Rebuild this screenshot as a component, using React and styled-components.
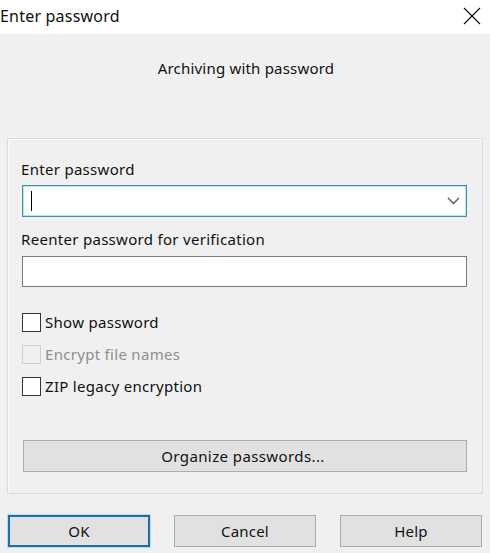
import React from "react";
import styled, { createGlobalStyle } from "styled-components";

const Global = createGlobalStyle`
  html, body { margin: 0; padding: 0; }
  body {
    width: 490px;
    height: 553px;
    overflow: hidden;
    background: #f0f0f0;
    font-family: "Noto Sans", "Open Sans", "Liberation Sans", sans-serif;
    color: #111;
  }
`;

const Window = styled.div`
  width: 490px;
  height: 553px;
  display: flex;
  flex-direction: column;
  background: #f0f0f0;
`;

const TitleBar = styled.div`
  height: 34px;
  background: #fff;
  display: flex;
  align-items: center;
  justify-content: space-between;
  padding: 0 9px 0 0;
  box-sizing: border-box;
`;

const Title = styled.div`
  font-size: 16px;
  margin-top: -2px;
  letter-spacing: 0.2px;
`;

const CloseIcon = styled.svg`
  width: 18px;
  height: 18px;
  margin-top: -3px;
`;

const Body = styled.div`
  display: flex;
  flex-direction: column;
  padding: 0 7px 0 7px;
`;

const Subtitle = styled.div`
  text-align: center;
  font-size: 15px;
  letter-spacing: 0.2px;
  margin-top: 24px;
  height: 20px;
  line-height: 20px;
  padding-left: 2px;
`;

const GroupBox = styled.div`
  margin-top: 60px;
  height: 356px;
  box-sizing: border-box;
  border: 1px solid #dcdcdc;
  box-shadow: inset 1px 1px 0 #fafafa;
  padding: 20px 15px 0 14px;
  display: flex;
  flex-direction: column;
`;

const Label = styled.div`
  font-size: 15px;
  letter-spacing: 0.3px;
  height: 20px;
  line-height: 20px;
  margin-left: -1px;
  margin-bottom: ${(p) => p.$mb || 0}px;
  margin-top: ${(p) => p.$mt || 0}px;
`;

const Field = styled.div`
  height: ${(p) => p.$h}px;
  box-sizing: border-box;
  background: #fff;
  border: 1px solid ${(p) => (p.$focused ? "#3f94ad" : "#7a7a7a")};
  box-shadow: ${(p) => (p.$focused ? "inset 0 0 0 1px #bfe0ea" : "none")};
  display: flex;
  align-items: center;
  justify-content: space-between;
  padding: 0 6px 0 8px;
`;

const Caret = styled.div`
  width: 1px;
  height: 20px;
  background: #000;
`;

const Chevron = styled.svg`
  width: 13px;
  height: 8px;
`;

const Checks = styled.div`
  display: flex;
  flex-direction: column;
  gap: 12px;
  margin-top: 25px;
`;

const CheckRow = styled.label`
  display: flex;
  align-items: center;
  gap: 4px;
  height: 20px;
  font-size: 15px;
  letter-spacing: 0.3px;
  color: ${(p) => (p.$disabled ? "#8f8f8f" : "#111")};
`;

const Box = styled.span`
  width: 19px;
  height: 19px;
  box-sizing: border-box;
  border: 1.5px solid ${(p) => (p.$disabled ? "#cfcfcf" : "#333")};
  background: ${(p) => (p.$disabled ? "#f0f0f0" : "#fff")};
  flex: none;
`;

const WideButton = styled.div`
  margin-top: 44px;
  margin-left: 1px;
  height: 32px;
  box-sizing: border-box;
  border: 1px solid #adadad;
  background: #e1e1e1;
  display: flex;
  align-items: center;
  justify-content: center;
  font-size: 15px;
  letter-spacing: 0.4px;
  padding-right: 4px;
`;

const ButtonRow = styled.div`
  display: flex;
  justify-content: space-between;
  padding: 0 1px 0 1px;
  margin-top: 21px;
`;

const Button = styled.div`
  width: 142px;
  height: 32px;
  box-sizing: border-box;
  border: ${(p) => (p.$default ? "2px solid #1f6fa6" : "1px solid #adadad")};
  box-shadow: ${(p) => (p.$default ? "0 0 0 1px #b7dcf2" : "none")};
  background: #e1e1e1;
  display: flex;
  align-items: center;
  justify-content: center;
  font-size: 15px;
  letter-spacing: 0.2px;
`;

export default function App() {
  return (
    <Window>
      <Global />
      <TitleBar>
        <Title>Enter password</Title>
        <CloseIcon viewBox="0 0 18 18">
          <path d="M1 1 L17 17 M17 1 L1 17" stroke="#111" strokeWidth="1.2" fill="none" />
        </CloseIcon>
      </TitleBar>
      <Body>
        <Subtitle>Archiving with password</Subtitle>
        <GroupBox>
          <Label $mb={6}>Enter password</Label>
          <Field $h={32} $focused>
            <Caret />
            <Chevron viewBox="0 0 13 8">
              <path d="M1 1 L6.5 6.5 L12 1" stroke="#555" strokeWidth="1.3" fill="none" />
            </Chevron>
          </Field>
          <Label $mt={12} $mb={7}>Reenter password for verification</Label>
          <Field $h={31} />
          <Checks>
            <CheckRow>
              <Box />
              Show password
            </CheckRow>
            <CheckRow $disabled>
              <Box $disabled />
              Encrypt file names
            </CheckRow>
            <CheckRow>
              <Box />
              ZIP legacy encryption
            </CheckRow>
          </Checks>
          <WideButton>Organize passwords...</WideButton>
        </GroupBox>
        <ButtonRow>
          <Button $default>OK</Button>
          <Button>Cancel</Button>
          <Button>Help</Button>
        </ButtonRow>
      </Body>
    </Window>
  );
}
